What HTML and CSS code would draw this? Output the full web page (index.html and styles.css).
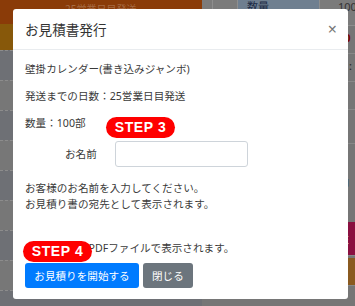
FILE: index.html
```html
<!DOCTYPE html>
<html lang="ja">

<head>
    <meta charset="utf-8">
    <title>お見積書発行</title>
    <link rel="stylesheet" href="styles.css">
</head>

<body>
    <!--Page behind the dialog-->
    <div class="page">
        <div class="main">
            <div class="hero"><span>25営業日目発送</span></div>
            <div class="band"></div>
            <div class="list">
                <div class="list-row"></div>
                <div class="list-row alt"></div>
                <div class="list-row"></div>
                <div class="list-row alt"></div>
                <div class="list-row"></div>
                <div class="list-row alt"></div>
                <div class="list-row"></div>
                <div class="list-row alt"></div>
                <div class="list-row"></div>
            </div>
        </div>
        <div class="side">
            <div class="spec-head">
                <div class="cell gap"></div>
                <div class="cell"></div>
                <div class="cell key">数量</div>
                <div class="cell val">100</div>
            </div>
            <div class="spec-body">
                <div class="spec-row price">00</div>
                <div class="spec-row">日:</div>
                <div class="spec-row">月</div>
                <div class="spec-row empty"></div>
                <div class="spec-row link">ol</div>
                <div class="spec-row link tall">印<br>ol</div>
                <div class="spec-row cta">注</div>
                <div class="spec-row foot"></div>
            </div>
        </div>
    </div>

    <!--Estimate dialog-->
    <div class="backdrop">
        <div class="modal">
            <div class="modal-header">
                <h5 class="modal-title">お見積書発行</h5>
                <span class="close">&times;</span>
            </div>
            <div class="modal-body">
                <p>壁掛カレンダー(書き込みジャンボ)</p>
                <p>発送までの日数：25営業日目発送</p>
                <p>数量：100部</p>
                <div class="form-row">
                    <span class="step step3">STEP 3</span>
                    <label for="name" class="form-label">お名前</label>
                    <input type="text" id="name" class="form-control">
                </div>
                <p class="note">お客様のお名前を入力してください。<br>お見積り書の宛先として表示されます。</p>
                <p class="pdf">お見積り書はPDFファイルで表示されます。</p>
                <div class="actions">
                    <span class="step step4">STEP 4</span>
                    <button class="btn btn-primary">お見積りを開始する</button>
                    <button class="btn btn-secondary">閉じる</button>
                </div>
            </div>
        </div>
    </div>
</body>

</html>
```

FILE: styles.css
```css
/*global styling*/
* {
    box-sizing: border-box;
}

body {
    margin: 0;
    padding: 0;
    width: 355px;
    height: 306px;
    overflow: hidden;
    font-family: "Noto Sans", "Noto Sans CJK JP", sans-serif;
    background-color: #707074;
}

/*background page*/
.page {
    display: grid;
    grid-template-columns: 202px 1fr;
    height: 306px;
}

.hero {
    height: 24px;
    background-color: #8a3b08;
    color: rgba(255, 255, 255, 0.25);
    font-size: 10px;
    line-height: 14px;
    padding: 2px 0 0 65px;
}

.band {
    height: 26px;
    background-color: #87580a;
}

.list-row {
    height: 30px;
    background-color: #6e7075;
    border-top: 1px dashed #8c8c8c;
}

.list-row.alt {
    background-color: #777777;
}

.side {
    background-color: #767676;
}

.spec-head {
    display: grid;
    grid-template-columns: 11px 25px 82px 1fr;
    height: 26px;
}

.cell {
    border-right: 1px solid #8e8e8e;
    border-bottom: 1px solid #8e8e8e;
    background-color: #7b7b7b;
    font-size: 11px;
    line-height: 14px;
}

.cell.key {
    background-color: #6f7f90;
    color: #1d2b45;
    padding-left: 9px;
}

.cell.val {
    color: #333;
    padding-left: 18px;
}

.spec-row {
    height: 28px;
    padding-left: 136px;
    font-size: 11px;
    line-height: 24px;
    color: #222;
    border-bottom: 1px solid #888;
}

.spec-row.price {
    color: #7a0000;
    font-weight: bold;
}

.spec-row.link {
    color: #2b3f9a;
    border-bottom: none;
    line-height: 12px;
    padding-top: 6px;
}

.spec-row.tall {
    height: 42px;
}

.spec-row.empty {
    height: 34px;
}

.spec-row.cta {
    height: 34px;
    margin-top: 8px;
    background-color: #8a1040;
    color: #ddd;
    line-height: 34px;
}

.spec-row.foot {
    margin-top: 2px;
    background-color: #8a5a20;
}

/*dialog*/
.backdrop {
    position: fixed;
    inset: 0;
    padding: 9px 0 0 13px;
}

.modal {
    width: 335px;
    background-color: #fff;
    border-radius: 3px;
    color: #3a3a3a;
}

.modal-header {
    display: flex;
    justify-content: space-between;
    align-items: center;
    height: 41px;
    padding: 0 11px 0 12px;
    border-bottom: 1px solid #e9ecef;
}

.modal-title {
    margin: 0;
    font-size: 13.6px;
    font-weight: 400;
    color: #333;
}

.close {
    font-size: 16px;
    color: #777;
    line-height: 1;
}

.modal-body {
    padding: 11px 11px 11px 12px;
    font-size: 10.6px;
    line-height: 16px;
}

.modal-body p {
    margin: 0 0 11px 0;
}

/*name row*/
.form-row {
    position: relative;
    display: flex;
    align-items: center;
    margin: -1px 0 13px 0;
    padding-left: 40px;
}

.form-label {
    width: 50px;
}

.form-control {
    width: 133px;
    height: 26px;
    border: 1px solid #ced4da;
    border-radius: 3px;
    margin: 0;
}

.modal-body p.note {
    margin-bottom: 28px;
}

.modal-body p.pdf {
    margin-bottom: 7px;
}

/*step badges*/
.step {
    position: absolute;
    width: 69px;
    height: 21px;
    border-radius: 11px;
    background-color: #ff0000;
    color: #fff;
    font-family: "Liberation Sans", sans-serif;
    font-weight: bold;
    font-size: 14px;
    letter-spacing: 0.6px;
    line-height: 21px;
    text-align: center;
}

.step3 {
    left: 81px;
    top: -24px;
}

.step4 {
    left: -2px;
    top: -22px;
}

/*buttons*/
.actions {
    position: relative;
    display: flex;
    gap: 4px;
}

.btn {
    height: 25px;
    padding: 0 8px;
    border: 1px solid transparent;
    border-radius: 3px;
    color: #fff;
    font-family: inherit;
    font-size: 10.6px;
    white-space: nowrap;
}

.btn-primary {
    background-color: #007bff;
    width: 114px;
}

.btn-secondary {
    background-color: #6c757d;
}
```
